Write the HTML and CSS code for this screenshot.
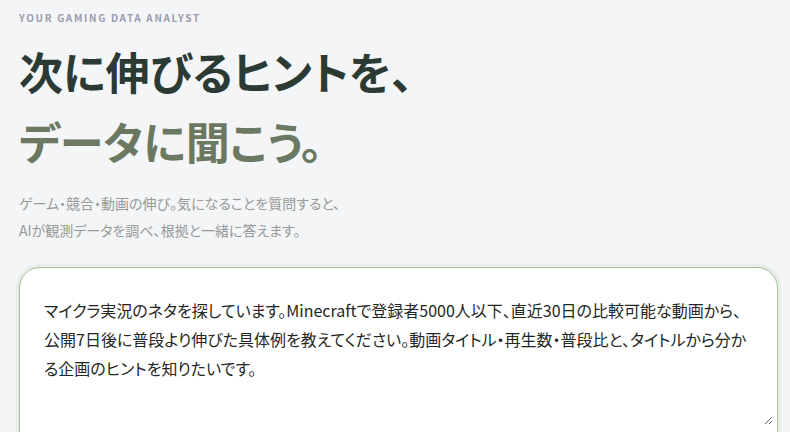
FILE: index.html
```html
<!DOCTYPE html>
<html lang="ja">
<head>
<meta charset="utf-8">
<title>Gaming Data Analyst</title>
<link rel="stylesheet" href="styles.css">
</head>
<body>
<main class="page">
  <p class="eyebrow">YOUR GAMING DATA ANALYST</p>
  <h1 class="title"><span class="title-dark">次に伸びるヒントを、</span><br><span class="title-accent">データに聞こう。</span></h1>
  <p class="lead">ゲーム・競合・動画の伸び。気になることを質問すると、<br>AIが観測データを調べ、根拠と一緒に答えます。</p>
  <div class="card">
    <textarea id="ask" class="ask" spellcheck="false">マイクラ実況のネタを探しています。Minecraftで登録者5000人以下、直近30日の比較可能な動画から、公開7日後に普段より伸びた具体例を教えてください。動画タイトル・再生数・普段比と、タイトルから分かる企画のヒントを知りたいです。</textarea>
    <div class="card-foot"></div>
  </div>
</main>
<script src="script.js"></script>
</body>
</html>
```
FILE: styles.css
```css
html, body {
  margin: 0;
  padding: 0;
  background: #f4f5f6;
  overflow: hidden;
}
body {
  font-family: "Noto Sans CJK JP", "Noto Sans", sans-serif;
  font-feature-settings: "palt";
  color: #2c3b35;
}
.page {
  padding: 10px 12px 0 19px;
}
.eyebrow {
  margin: 0;
  font-size: 10px;
  line-height: 16px;
  font-weight: 700;
  letter-spacing: 0.165em;
  color: #9b9cb0;
}
.title {
  margin: 10px 0 0 0;
  font-size: 44px;
  line-height: 70px;
  font-weight: 700;
  letter-spacing: 0;
}
.title-dark { color: #2c3a34; }
.title-accent { color: #6b7862; }
.lead {
  margin: 14px 0 0 0;
  font-size: 14px;
  line-height: 27px;
  color: #979a99;
}
.card {
  margin-top: 23px;
  background: #ffffff;
  border: 1px solid #a6c098;
  border-radius: 21px;
  padding: 4px 4px 40px 4px;
  box-shadow: 0 0 0 3px rgba(170, 195, 157, 0.12), 0 2px 8px rgba(60, 80, 60, 0.05);
}
.ask {
  display: block;
  box-sizing: border-box;
  width: 100%;
  height: 153px;
  margin: 0;
  padding: 24px 24px 10px 20px;
  border: none;
  outline: none;
  background: transparent;
  font-family: "Noto Sans CJK JP", "Noto Sans", sans-serif;
  font-feature-settings: "palt";
  font-size: 16px;
  line-height: 29px;
  color: #1f2724;
  resize: vertical;
  caret-color: #222;
}
.card-foot {
  height: 10px;
}
```
FILE: script.js
```js
var t = document.getElementById('ask');
t.focus();
t.setSelectionRange(t.value.length, t.value.length);
```
